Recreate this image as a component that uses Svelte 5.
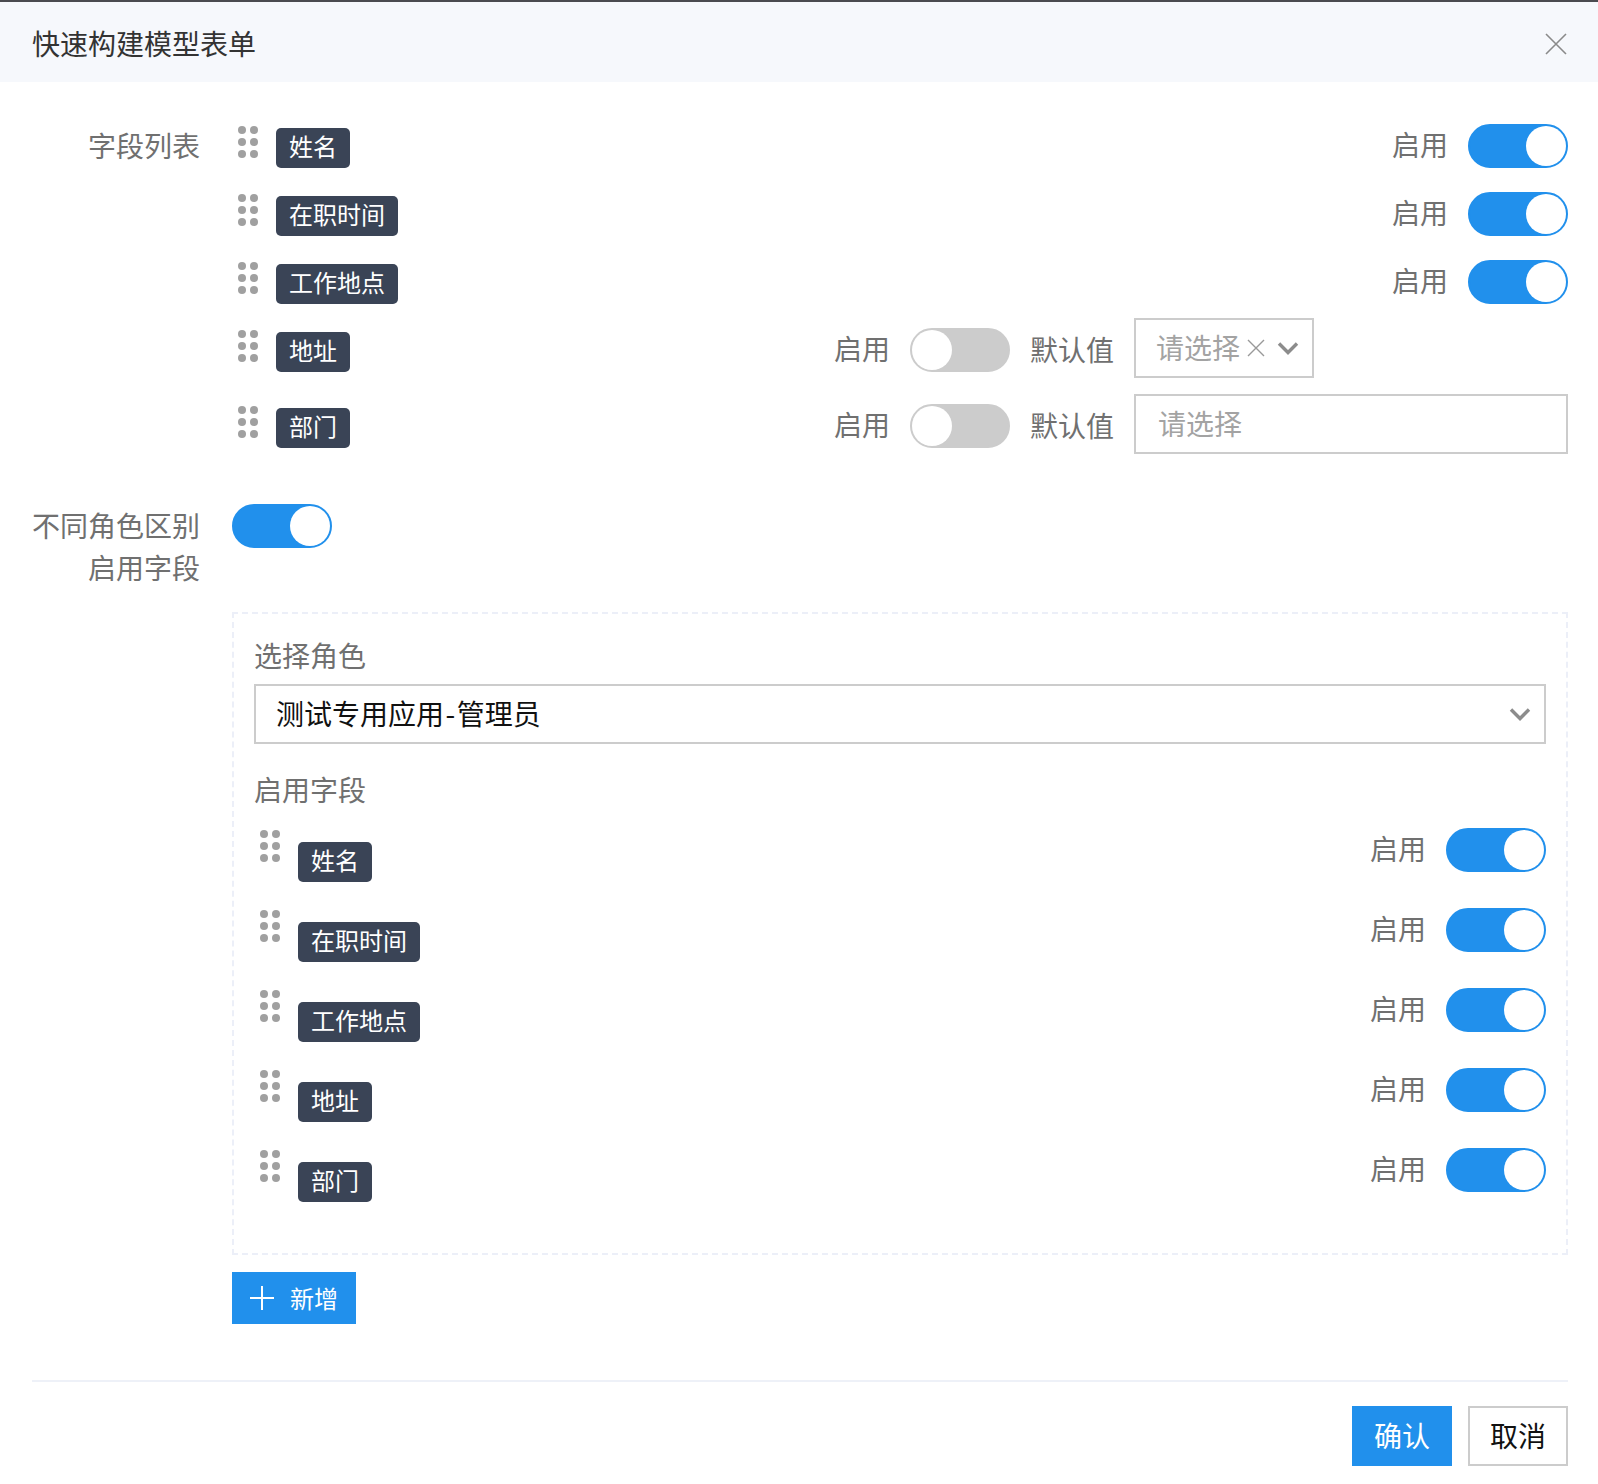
<script lang="ts">
  const fields = [
    { name: "姓名", enabled: true },
    { name: "在职时间", enabled: true },
    { name: "工作地点", enabled: true },
    { name: "地址", enabled: false, select: "small" },
    { name: "部门", enabled: false, select: "wide" },
  ];
  const roleFields = ["姓名", "在职时间", "工作地点", "地址", "部门"];
</script>

{#snippet handle()}
  <span class="handle">
    {#each Array(6) as _}<i></i>{/each}
  </span>
{/snippet}

{#snippet toggle(on)}
  <span class="switch" class:on><b></b></span>
{/snippet}

{#snippet chevron()}
  <svg class="chevron" width="22" height="14" viewBox="0 0 22 14" fill="none">
    <path d="M2 2.5l9 9 9-9" stroke="#8c8c8c" stroke-width="3.4" />
  </svg>
{/snippet}

<div class="modal">
  <header>
    <h1>快速构建模型表单</h1>
    <svg class="close" width="22" height="22" viewBox="0 0 22 22" fill="none">
      <path d="M1 1l20 20M21 1L1 21" stroke="#8a8a8a" stroke-width="1.6" />
    </svg>
  </header>

  <div class="body">
    <div class="form-row list-row">
      <div class="label">字段列表</div>
      <div class="content">
        {#each fields as field}
          <div class="field" class:wide={field.select === "wide"} class:small={field.select === "small"}>
            {@render handle()}
            <span class="tag">{field.name}</span>
            <span class="enable">启用</span>
            {@render toggle(field.enabled)}
            {#if field.select === "small"}
              <span class="default-label">默认值</span>
              <div class="select small-select">
                <span class="placeholder">请选择</span>
                <svg class="clear" width="18" height="18" viewBox="0 0 18 18" fill="none">
                  <path d="M1 1l16 16M17 1L1 17" stroke="#999" stroke-width="1.4" />
                </svg>
                {@render chevron()}
              </div>
            {:else if field.select === "wide"}
              <span class="default-label">默认值</span>
              <div class="select wide-select">
                <span class="placeholder">请选择</span>
              </div>
            {/if}
          </div>
        {/each}
      </div>
    </div>

    <div class="form-row role-row">
      <div class="label">不同角色区别<br />启用字段</div>
      <div class="content">{@render toggle(true)}</div>
    </div>

    <div class="role-area">
      <div class="role-box">
        <div class="box-title">选择角色</div>
        <div class="select role-select">
          <span class="value">测试专用应用<span class="dash">-</span>管理员</span>
          {@render chevron()}
        </div>
        <div class="box-title second">启用字段</div>
        {#each roleFields as name}
          <div class="role-field">
            {@render handle()}
            <span class="tag">{name}</span>
            <span class="enable">启用</span>
            {@render toggle(true)}
          </div>
        {/each}
      </div>

      <button class="btn primary add">
        <svg width="24" height="24" viewBox="0 0 24 24" fill="none">
          <path d="M0 12h24M12 0v24" stroke="#fff" stroke-width="2" />
        </svg>
        <span>新增</span>
      </button>
    </div>

    <hr />

    <footer>
      <button class="btn primary">确认</button>
      <button class="btn plain">取消</button>
    </footer>
  </div>
</div>

<style>
  :global(body) {
    background: #fff;
    font-family: "Noto Sans CJK SC", "Noto Sans", sans-serif;
  }

  .modal {
    width: 1598px;
    height: 1484px;
    box-sizing: border-box;
    border-top: 2px solid #4a4b50;
    overflow: hidden;
  }

  header {
    height: 80px;
    padding: 0 31px 0 32px;
    background: #f6f8fc;
    display: flex;
    align-items: center;
    justify-content: space-between;
  }

  h1 {
    margin: 0;
    padding-top: 2px;
    font-size: 28px;
    font-weight: 400;
    line-height: 42px;
    color: #333;
  }

  .close {
    margin-top: 3px;
  }

  .body {
    padding: 42px 30px 0 32px;
  }

  .form-row {
    display: flex;
    gap: 32px;
  }

  .label {
    width: 168px;
    flex: none;
    text-align: right;
    font-size: 28px;
    line-height: 42px;
    color: #707070;
  }

  .content {
    flex: 1;
  }

  .list-row {
    margin-bottom: 56px;
  }

  .role-row {
    margin-bottom: 24px;
    height: 84px;
  }

  .field {
    display: flex;
    align-items: flex-start;
    height: 44px;
    margin-bottom: 24px;
  }

  .field.small {
    margin-bottom: 32px;
  }

  .field.wide {
    margin-bottom: 0;
  }

  .handle {
    width: 20px;
    margin: 2px 18px 0 6px;
    flex: none;
    display: grid;
    grid-template-columns: 8px 8px;
    gap: 4px;
  }

  .handle i {
    width: 8px;
    height: 8px;
    border-radius: 50%;
    background: #a0a0a0;
  }

  .tag {
    height: 40px;
    margin-top: 4px;
    padding: 0 13px;
    box-sizing: border-box;
    border-radius: 5px;
    background: #3a4456;
    color: #fff;
    font-size: 24px;
    line-height: 36px;
    white-space: nowrap;
  }

  .enable {
    margin-left: auto;
    margin-right: 20px;
    font-size: 28px;
    line-height: 40px;
    color: #707070;
    white-space: nowrap;
  }

  .switch {
    width: 100px;
    height: 44px;
    flex: none;
    box-sizing: border-box;
    border: 2px solid #ccc;
    border-radius: 22px;
    background: #ccc;
    display: flex;
  }

  .switch.on {
    border-color: #2190ec;
    background: #2190ec;
    justify-content: flex-end;
  }

  .switch b {
    width: 40px;
    height: 40px;
    border-radius: 50%;
    background: #fff;
  }

  .default-label {
    margin: 0 20px;
    font-size: 28px;
    line-height: 42px;
    color: #707070;
    white-space: nowrap;
  }

  .select {
    height: 60px;
    box-sizing: border-box;
    border: 2px solid #ccc;
    display: flex;
    align-items: center;
    font-size: 28px;
    background: #fff;
  }

  .select span {
    padding-bottom: 2px;
  }

  .small-select,
  .wide-select {
    margin-top: -10px;
    flex: none;
  }

  .small-select {
    width: 180px;
    padding: 0 13px 0 20px;
    margin-right: 254px;
  }

  .wide-select {
    width: 434px;
    padding-left: 22px;
  }

  .placeholder {
    color: #a3a3a3;
    white-space: nowrap;
  }

  .clear {
    margin-left: 7px;
    flex: none;
  }

  .small-select .chevron {
    margin-left: auto;
  }

  .role-area {
    margin-left: 200px;
  }

  .role-box {
    border: 2px dashed #eceff8;
    padding: 20px 20px 25px;
  }

  .box-title {
    font-size: 28px;
    line-height: 42px;
    color: #707070;
    margin-bottom: 8px;
  }

  .box-title.second {
    margin: 24px 0 18px;
  }

  .role-select {
    padding: 0 13px 0 20px;
    justify-content: space-between;
  }

  .value {
    color: #111;
  }

  .value .dash {
    padding: 0 1.5px;
  }

  .role-field {
    display: flex;
    align-items: flex-start;
    height: 54px;
    margin-bottom: 26px;
  }

  .role-field .tag {
    margin-top: 14px;
  }

  .btn {
    width: 100px;
    height: 60px;
    padding: 0 0 2px;
    box-sizing: border-box;
    font-family: inherit;
    font-size: 28px;
    border: none;
    border-radius: 0;
  }

  .primary {
    background: #2190ec;
    color: #fff;
  }

  .plain {
    background: #fff;
    border: 2px solid #ccc;
    color: #111;
  }

  .add {
    width: 124px;
    height: 52px;
    margin-top: 17px;
    padding: 0 0 0 18px;
    font-size: 24px;
    display: flex;
    align-items: center;
    gap: 16px;
  }

  .add span {
    margin-bottom: 2px;
  }

  hr {
    height: 2px;
    margin: 56px 0 24px;
    border: none;
    background: #eef1f8;
  }

  footer {
    display: flex;
    justify-content: flex-end;
    gap: 16px;
  }
</style>
